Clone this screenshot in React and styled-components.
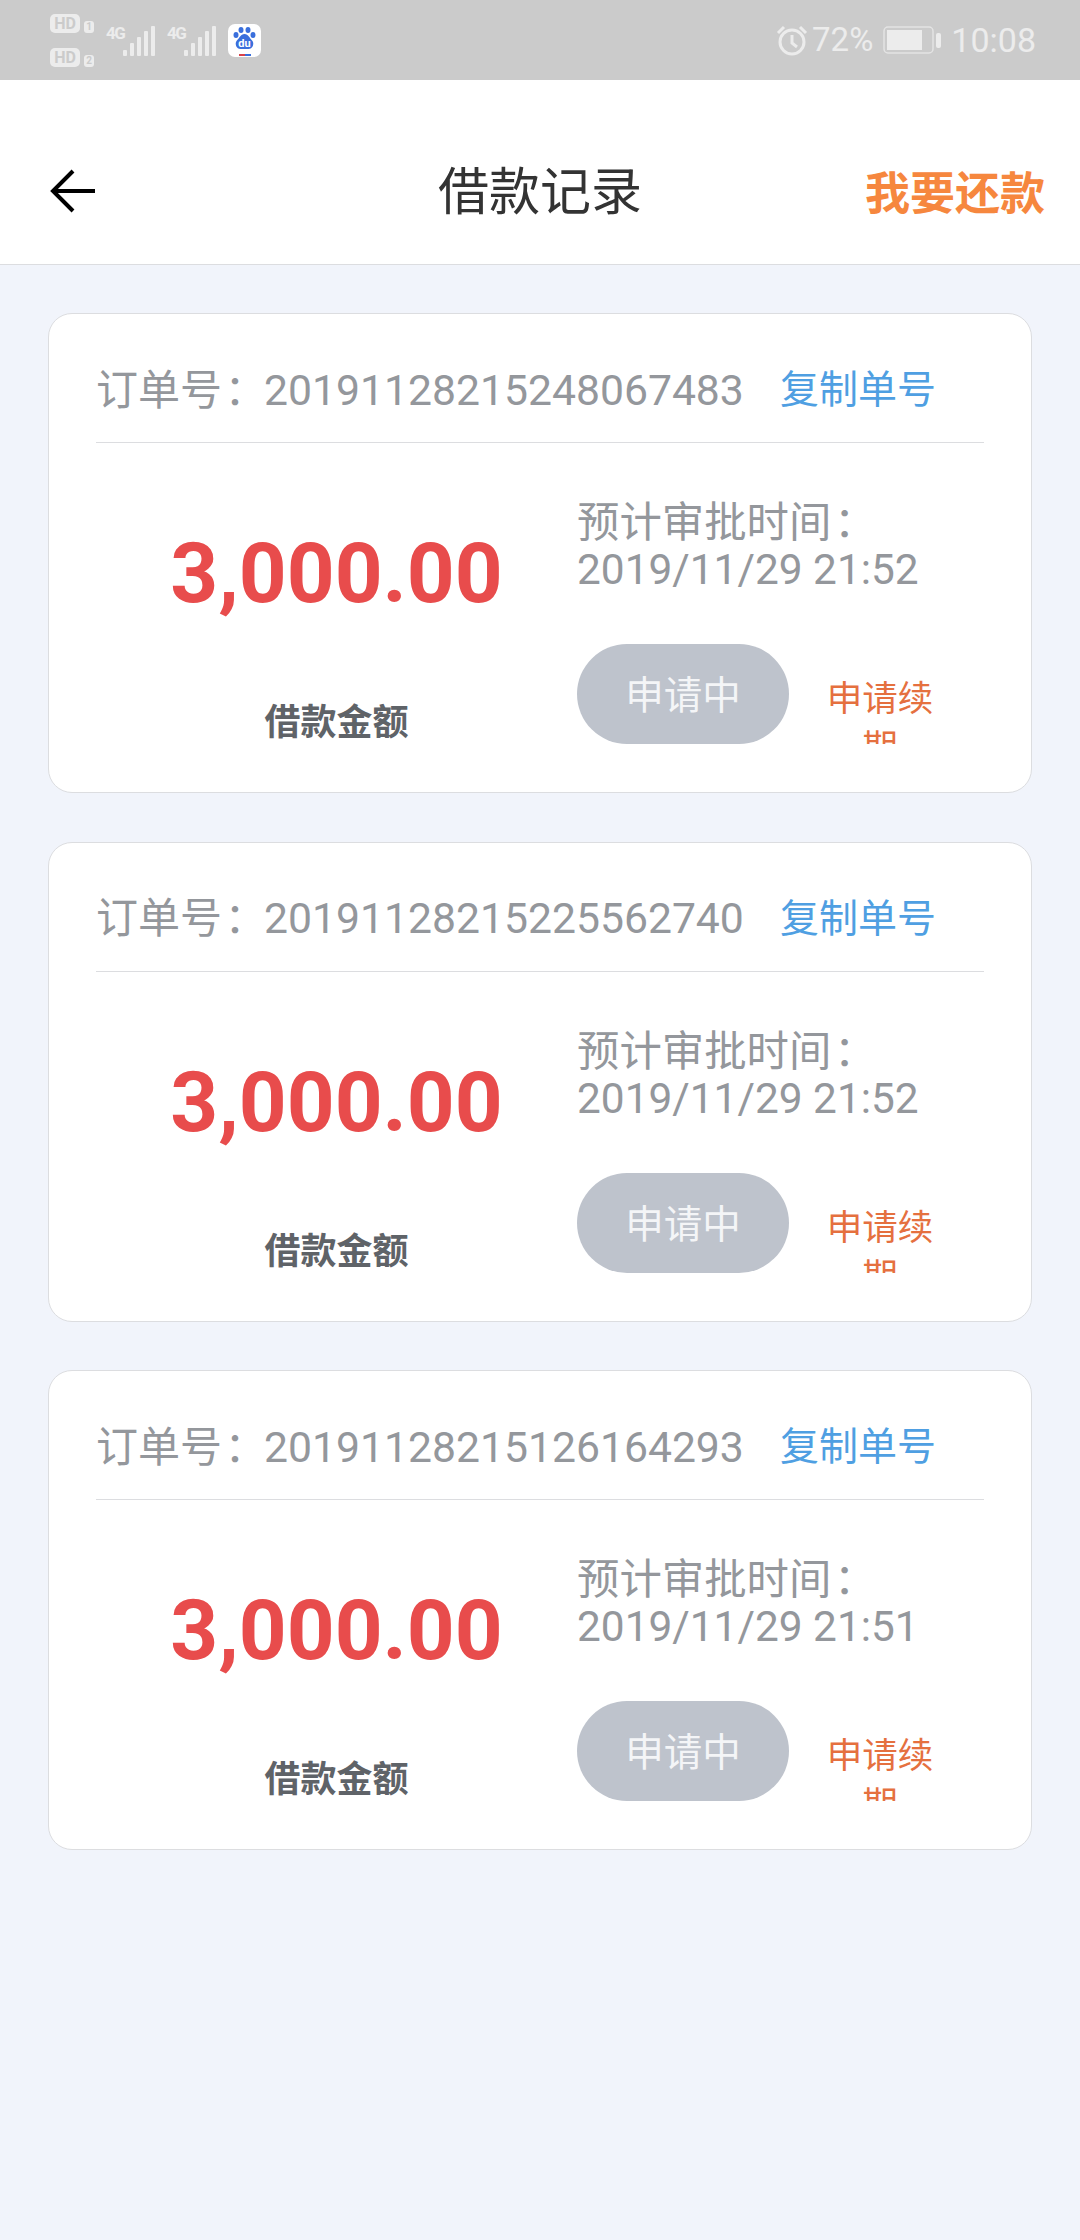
import React from 'react'
import styled, { createGlobalStyle } from 'styled-components'

const GlobalStyle = createGlobalStyle`
  html, body { margin: 0; padding: 0; background: #f1f4fb; }
  body { font-family: Roboto, "Noto Sans CJK SC", sans-serif; }
`

const Page = styled.div`
  width: 1080px;
  min-height: 2240px;
  background: #f1f4fb;
`

const StatusBar = styled.div`
  height: 80px;
  background: #cbcbcb;
  color: #ececec;
  display: flex;
  align-items: center;
  justify-content: space-between;
  padding: 0 44px 0 50px;
  box-sizing: border-box;
`

const StatusGroup = styled.div`
  display: flex;
  align-items: center;
  gap: ${(p) => p.$gap || 0}px;
`

const SimColumn = styled.div`
  display: flex;
  flex-direction: column;
  gap: 15px;
  margin-right: 12px;
`

const SimRow = styled.div`
  display: flex;
  align-items: flex-end;
  gap: 4px;
`

const HdBadge = styled.span`
  width: 30px;
  height: 19px;
  border-radius: 5px;
  background: #ececec;
  color: #cbcbcb;
  font: 700 16px/19px Roboto, sans-serif;
  text-align: center;
`

const SimNumber = styled.span`
  width: 10px;
  height: 12px;
  border-radius: 3px;
  background: #ececec;
  color: #cbcbcb;
  font: 700 10px/12px Roboto, sans-serif;
  text-align: center;
`

const Signal = styled.div`
  display: flex;
  align-items: flex-start;
  width: 49px;
  height: 32px;
  margin-right: 12px;
`

const NetLabel = styled.span`
  width: 17px;
  margin-top: 2px;
  font: 700 17px/14px Roboto, sans-serif;
  letter-spacing: -1.5px;
`

const StatusText = styled.span`
  font-size: ${(p) => p.$size}px;
  line-height: 40px;
  font-weight: 400;
`

const AlarmSvg = styled.svg`
  margin-right: -6px;
`

const Header = styled.header`
  height: 185px;
  background: #fff;
  border-bottom: 1px solid #dcdde0;
  box-sizing: border-box;
  padding: 37px 35px 0;
  display: grid;
  grid-template-columns: 1fr auto 1fr;
  align-items: center;
`

const BackButton = styled.div`
  display: flex;
  padding-left: 15px;
`

const Title = styled.h1`
  margin: 5px 0 0;
  font-size: 51px;
  line-height: 60px;
  font-weight: 400;
  color: #333;
`

const RepayLink = styled.a`
  justify-self: end;
  color: #f6873e;
  font-size: 45px;
  font-weight: 700;
`

const List = styled.main`
  padding: 48px 48px 0;
  display: flex;
  flex-direction: column;
  gap: 48.5px;
`

const Card = styled.section`
  height: 480px;
  box-sizing: border-box;
  background: #fff;
  border: 1px solid #dcdde0;
  border-radius: 24px;
  padding: 0 47px;
`

const OrderRow = styled.div`
  height: 129px;
  padding: 16px 48px 0 0;
  border-bottom: 1px solid #dcdde0;
  display: flex;
  align-items: center;
  justify-content: space-between;
  box-sizing: border-box;
`

const OrderNumber = styled.span`
  color: #94979c;
  font-size: 42.7px;
  white-space: nowrap;
`

const OrderLabel = styled.span`
  font-size: 42px;
`

// the colon sits a little further in than the SC glyph does
const Colon = styled.span`
  margin: 0 -0.06em 0 0.06em;
`

const CopyLink = styled.a`
  color: #4f9fe2;
  font-size: 39px;
  white-space: nowrap;
`

const CardBody = styled.div`
  display: grid;
  grid-template-columns: 481px 1fr;
`

const AmountColumn = styled.div`
  display: flex;
  flex-direction: column;
  align-items: center;
  padding-top: 80px;
`

const Amount = styled.div`
  color: #e84c4c;
  font-size: 83.6px;
  line-height: 100px;
  font-weight: 700;
`

const AmountLabel = styled.div`
  margin-top: 76px;
  color: #5f6368;
  font-size: 36px;
  line-height: 48px;
  font-weight: 700;
`

const InfoColumn = styled.div`
  display: flex;
  flex-direction: column;
  padding-top: 56px;
`

const ApprovalTime = styled.div`
  color: #94979c;
  font-size: 42.4px;
  line-height: 47px;
  white-space: nowrap;
`

const Actions = styled.div`
  display: flex;
  margin-top: 51px;
  gap: 27px;
`

const StatusPill = styled.div`
  width: 212px;
  height: 100px;
  border-radius: 50px;
  background: #bec3cc;
  color: #f4f5f7;
  font-size: 38.5px;
  line-height: 103px;
  text-align: center;
`

// the second line really is clipped by this box in the reference
const RenewLink = styled.a`
  width: 118px;
  height: 100px;
  margin-left: 5px;
  overflow: hidden;
  padding-top: 31px;
  box-sizing: border-box;
  color: #e5703f;
  font-size: 35.5px;
  line-height: 49px;
  text-align: center;
`

const BackArrow = () => (
  <svg width="46" height="44" viewBox="0 0 46 44" fill="none" stroke="#000" strokeWidth="4">
    <path d="M45 22H3M23 2 3 22l20 20" />
  </svg>
)

const SignalBars = () => (
  <Signal>
    <NetLabel>4G</NetLabel>
    <svg width="32" height="32" viewBox="0 0 32 32" fill="#ececec">
      <rect x="0" y="26" width="4" height="6" rx="1" />
      <rect x="7" y="19" width="4" height="13" rx="1" />
      <rect x="14" y="13" width="4" height="19" rx="1" />
      <rect x="21" y="7" width="4" height="25" rx="1" />
      <rect x="28" y="2" width="4" height="30" rx="1" />
    </svg>
  </Signal>
)

const BaiduIcon = () => (
  <svg width="33" height="33" viewBox="0 0 33 33">
    <rect width="33" height="33" rx="7" fill="#fff" />
    <g fill="#3a6fdc">
      <ellipse cx="8" cy="11" rx="2.5" ry="3" />
      <ellipse cx="13" cy="6" rx="2.5" ry="3" />
      <ellipse cx="20" cy="6" rx="2.5" ry="3" />
      <ellipse cx="25" cy="11" rx="2.5" ry="3" />
      <path d="M16.5 10c4 0 5 4 8 7 2 3 0 8-4 8h-8c-4 0-6-5-4-8 3-3 4-7 8-7z" />
    </g>
    <text x="16.5" y="23" textAnchor="middle" fontSize="11" fontWeight="700" fill="#fff" fontFamily="Roboto, sans-serif">du</text>
    <rect x="11" y="30" width="6" height="2" fill="#d8414a" />
    <rect x="17" y="30" width="6" height="2" fill="#3a6fdc" />
  </svg>
)

const AlarmIcon = () => (
  <AlarmSvg width="32" height="32" viewBox="0 0 32 32" fill="none" stroke="#ececec" strokeWidth="3">
    <circle cx="16" cy="18" r="12" />
    <path d="M16 11v8l5 4M2 9l6-6M30 9l-6-6" />
  </AlarmSvg>
)

const BatteryIcon = () => (
  <svg width="58" height="28" viewBox="0 0 58 28" fill="none">
    <rect x="1" y="1" width="49" height="26" rx="4" stroke="#e4e4e4" strokeWidth="1.5" />
    <rect x="4" y="4" width="35" height="20" fill="#ececec" />
    <rect x="53" y="7" width="5" height="15" rx="2" fill="#ececec" />
  </svg>
)

const orders = [
  { id: '20191128215248067483', time: '2019/11/29 21:52' },
  { id: '20191128215225562740', time: '2019/11/29 21:52' },
  { id: '20191128215126164293', time: '2019/11/29 21:51' },
]

const OrderCard = ({ id, time }) => (
  <Card>
    <OrderRow>
      <OrderNumber><OrderLabel>订单号<Colon>：</Colon></OrderLabel>{id}</OrderNumber>
      <CopyLink>复制单号</CopyLink>
    </OrderRow>
    <CardBody>
      <AmountColumn>
        <Amount>3,000.00</Amount>
        <AmountLabel>借款金额</AmountLabel>
      </AmountColumn>
      <InfoColumn>
        <ApprovalTime>预计审批时间<Colon>：</Colon><br />{time}</ApprovalTime>
        <Actions>
          <StatusPill>申请中</StatusPill>
          <RenewLink>申请续期</RenewLink>
        </Actions>
      </InfoColumn>
    </CardBody>
  </Card>
)

export default function App() {
  return (
    <Page>
      <GlobalStyle />
      <StatusBar>
        <StatusGroup>
          <SimColumn>
            <SimRow><HdBadge>HD</HdBadge><SimNumber>1</SimNumber></SimRow>
            <SimRow><HdBadge>HD</HdBadge><SimNumber>2</SimNumber></SimRow>
          </SimColumn>
          <SignalBars />
          <SignalBars />
          <BaiduIcon />
        </StatusGroup>
        <StatusGroup $gap={10}>
          <AlarmIcon />
          <StatusText $size={33}>72%</StatusText>
          <BatteryIcon />
          <StatusText $size={34}>10:08</StatusText>
        </StatusGroup>
      </StatusBar>
      <Header>
        <BackButton><BackArrow /></BackButton>
        <Title>借款记录</Title>
        <RepayLink>我要还款</RepayLink>
      </Header>
      <List>
        {orders.map((order) => <OrderCard key={order.id} {...order} />)}
      </List>
    </Page>
  )
}
